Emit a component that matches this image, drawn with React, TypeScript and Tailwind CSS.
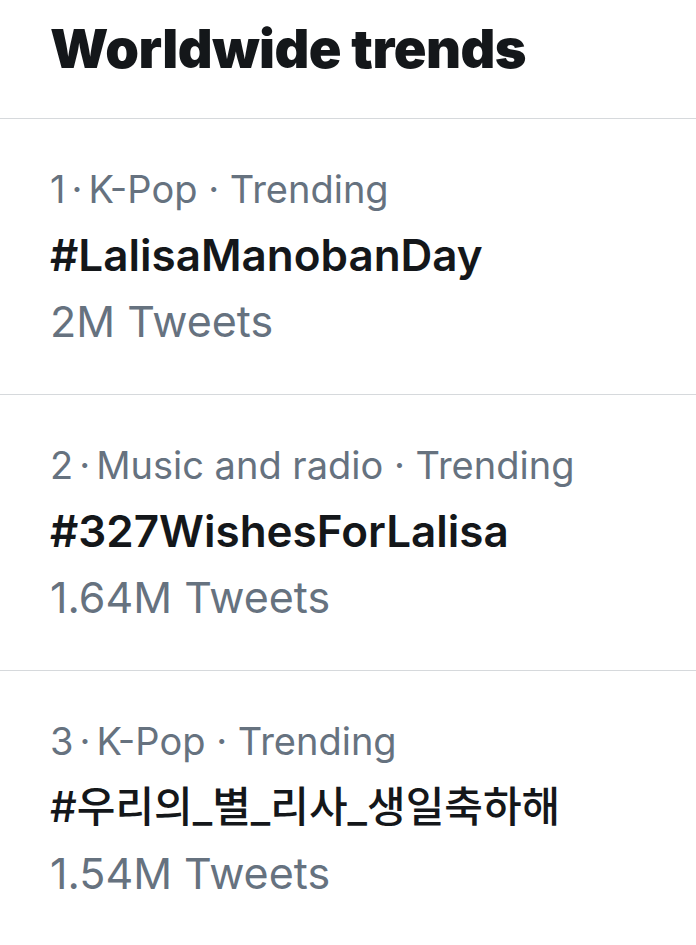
import React from 'react';

const trends = [
  { rank: 1, category: 'K-Pop', tag: '#LalisaManobanDay', count: '2M Tweets', tagClass: 'text-[44px] font-semibold' },
  { rank: 2, category: 'Music and radio', tag: '#327WishesForLalisa', count: '1.64M Tweets', tagClass: 'text-[44px] font-semibold' },
  { rank: 3, category: 'K-Pop', tag: '#우리의_별_리사_생일축하해', count: '1.54M Tweets', tagClass: 'text-[42px] font-medium' },
];

const App = () => {
  return (
    <div
      className="bg-white min-h-screen w-[696px] h-[945px] overflow-hidden"
      style={{ fontFamily: 'Inter, "Noto Sans CJK KR", sans-serif' }}
    >
      <header className="px-[50px] pt-[21px] h-[118px]">
        <h1 className="text-[54px] font-black leading-[56px] text-[#14171a] tracking-[-0.5px]">
          Worldwide trends
        </h1>
      </header>

      {trends.map((t) => (
        <section
          key={t.rank}
          className="border-t border-[#d6d9dc] h-[276px] px-[50px] pt-[37px]"
        >
          <p className="text-[38px] leading-[66px] text-[#66727f] whitespace-nowrap">
            {t.rank}
            <span className="mx-[6px]">·</span>
            {t.category} · Trending
          </p>
          <p className={`${t.tagClass} leading-[66px] text-[#14171a] whitespace-nowrap`}>
            {t.tag}
          </p>
          <p className="text-[43px] leading-[66px] text-[#66727f]">{t.count}</p>
        </section>
      ))}
    </div>
  );
};

export default App;
